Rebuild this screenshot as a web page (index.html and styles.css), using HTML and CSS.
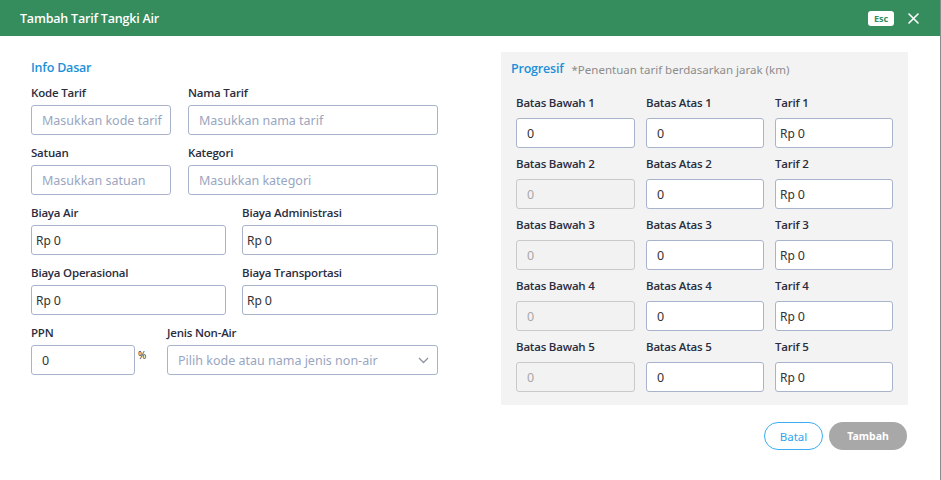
FILE: index.html
```html
<!DOCTYPE html>
<html lang="id">
<head>
<meta charset="utf-8">
<title>Tambah Tarif Tangki Air</title>
<link rel="stylesheet" href="styles.css">
</head>
<body>
<div class="modal">
  <header class="modal-header">
    <h1 class="modal-title">Tambah Tarif Tangki Air</h1>
    <div class="header-actions">
      <span class="esc-badge">Esc</span>
      <svg class="close-icon" width="11" height="11" viewBox="0 0 11 11"><path d="M1 1L10 10M10 1L1 10" stroke="#fff" stroke-width="1.6" stroke-linecap="round"/></svg>
    </div>
  </header>
  <div class="modal-body">
    <section class="info">
      <h2 class="section-title">Info Dasar</h2>
      <div class="row row-a">
        <div class="field"><label>Kode Tarif</label><div class="input placeholder">Masukkan kode tarif</div></div>
        <div class="field"><label>Nama Tarif</label><div class="input placeholder">Masukkan nama tarif</div></div>
      </div>
      <div class="row row-a">
        <div class="field"><label>Satuan</label><div class="input placeholder">Masukkan satuan</div></div>
        <div class="field"><label>Kategori</label><div class="input placeholder">Masukkan kategori</div></div>
      </div>
      <div class="row row-b">
        <div class="field"><label>Biaya Air</label><div class="input rp">Rp<span>0</span></div></div>
        <div class="field"><label>Biaya Administrasi</label><div class="input rp">Rp<span>0</span></div></div>
      </div>
      <div class="row row-b">
        <div class="field"><label>Biaya Operasional</label><div class="input rp">Rp<span>0</span></div></div>
        <div class="field"><label>Biaya Transportasi</label><div class="input rp">Rp<span>0</span></div></div>
      </div>
      <div class="row row-c">
        <div class="field"><label>PPN</label>
          <div class="ppn-wrap"><div class="input num ppn">0</div><span class="pct">%</span></div>
        </div>
        <div class="field"><label>Jenis Non-Air</label>
          <div class="input placeholder select">Pilih kode atau nama jenis non-air
            <svg class="chev" width="11" height="7" viewBox="0 0 11 7"><path d="M1 1L5.5 5.5L10 1" fill="none" stroke="#8f959e" stroke-width="1.3"/></svg>
          </div>
        </div>
      </div>
    </section>
    <div class="right-col">
      <section class="progresif">
        <div class="prog-head"><h2 class="section-title">Progresif</h2><span class="note">*Penentuan tarif berdasarkan jarak (km)</span></div>
        <div class="prog-grid">
          <div class="field"><label>Batas Bawah 1</label><div class="input num">0</div></div>
          <div class="field"><label>Batas Atas 1</label><div class="input num">0</div></div>
          <div class="field"><label>Tarif 1</label><div class="input rp">Rp<span>0</span></div></div>

          <div class="field"><label>Batas Bawah 2</label><div class="input num disabled">0</div></div>
          <div class="field"><label>Batas Atas 2</label><div class="input num">0</div></div>
          <div class="field"><label>Tarif 2</label><div class="input rp">Rp<span>0</span></div></div>

          <div class="field"><label>Batas Bawah 3</label><div class="input num disabled">0</div></div>
          <div class="field"><label>Batas Atas 3</label><div class="input num">0</div></div>
          <div class="field"><label>Tarif 3</label><div class="input rp">Rp<span>0</span></div></div>

          <div class="field"><label>Batas Bawah 4</label><div class="input num disabled">0</div></div>
          <div class="field"><label>Batas Atas 4</label><div class="input num">0</div></div>
          <div class="field"><label>Tarif 4</label><div class="input rp">Rp<span>0</span></div></div>

          <div class="field"><label>Batas Bawah 5</label><div class="input num disabled">0</div></div>
          <div class="field"><label>Batas Atas 5</label><div class="input num">0</div></div>
          <div class="field"><label>Tarif 5</label><div class="input rp">Rp<span>0</span></div></div>
        </div>
      </section>
      <div class="footer">
        <button class="btn btn-outline">Batal</button>
        <button class="btn btn-disabled">Tambah</button>
      </div>
    </div>
  </div>
</div>
</body>
</html>
```

FILE: styles.css
```css
* { box-sizing: border-box; }
html, body { margin: 0; padding: 0; }
body {
  font-family: "Noto Sans", "Open Sans", sans-serif;
  background: #fff;
  width: 941px;
  height: 480px;
  overflow: hidden;
}
.modal {
  width: 941px;
  height: 480px;
  background: #fff;
  border-right: 1px solid #8a8a8a;
}
.modal-header {
  height: 36px;
  background: #358c5d;
  display: flex;
  align-items: center;
  justify-content: space-between;
  padding: 0 21px 0 20px;
}
.modal-title {
  margin: 0;
  color: #fff;
  font-family: "Open Sans", "Noto Sans", sans-serif;
  font-size: 12.5px;
  font-weight: 600;
  letter-spacing: -0.2px;
}
.header-actions { display: flex; align-items: center; gap: 13px; }
.esc-badge {
  background: #fff;
  color: #358c5d;
  font-size: 9px;
  font-weight: 700;
  border-radius: 3px;
  width: 26px;
  height: 15px;
  display: flex;
  align-items: center;
  justify-content: center;
  margin-right: 1px;
}
.close-icon { display: block; }
.modal-body {
  display: flex;
  gap: 63px;
  padding: 16px 0 0 31px;
}
.info { width: 407px; padding-top: 6px; }
.section-title {
  margin: 0;
  font-family: "Open Sans", "Noto Sans", sans-serif;
  font-size: 12.5px;
  font-weight: 600;
  color: #1a90d9;
  line-height: 20px;
  letter-spacing: -0.2px;
}
.info .section-title { margin-bottom: 6px; }
.row { display: grid; margin-bottom: 9px; }
.row-a { grid-template-columns: 140px 250px; column-gap: 17px; }
.row-b { grid-template-columns: 195px 196px; column-gap: 16px; }
.row-c { grid-template-columns: 120px 271px; column-gap: 16px; }
.field label {
  display: block;
  font-family: "Open Sans", "Noto Sans", sans-serif;
  font-size: 11.5px;
  font-weight: 600;
  color: #2a2d3e;
  line-height: 18px;
  margin-bottom: 3px;
  white-space: nowrap;
  letter-spacing: -0.2px;
}
.input {
  height: 30px;
  border: 1px solid #a9b4cc;
  border-radius: 3px;
  background: #fff;
  font-size: 12.5px;
  display: flex;
  align-items: center;
  color: #333;
  white-space: nowrap;
  overflow: hidden;
}
.placeholder { color: #9aa6bf; padding-left: 10px; }
.rp { padding-left: 4px; font-size: 12px; }
.rp span { margin-left: 3px; font-size: 12.5px; }
.num { padding-left: 10px; }
.ppn-wrap { display: flex; align-items: flex-start; }
.ppn { width: 104px; }
.pct { font-size: 10px; color: #333; margin-left: 3px; margin-top: 3px; }
.select { justify-content: space-between; padding-right: 8px; }
.chev { flex: none; }
.right-col { width: 407px; }
.progresif {
  background: #f3f3f3;
  padding: 8px 15px 13px 15px;
}
.prog-head { display: flex; align-items: center; gap: 8px; margin-left: -5px; height: 18px; margin-bottom: 16px; }
.note { font-size: 11.5px; color: #8c8c8c; }
.prog-grid {
  display: grid;
  grid-template-columns: 119px 118px 118px;
  column-gap: 11px;
  row-gap: 7px;
}
.prog-grid .field label { margin-bottom: 6px; }
.disabled { background: #f2f2f2; border-color: #c9c9c9; color: #a8a8a8; }
.footer {
  display: flex;
  justify-content: flex-end;
  gap: 6px;
  margin-top: 17px;
  padding-right: 1px;
}
.btn {
  font-family: inherit;
  height: 28px;
  border-radius: 14px;
  font-size: 11.5px;
  cursor: pointer;
}
.btn-outline {
  width: 59px;
  border: 1px solid #3aaef0;
  background: #fff;
  color: #2ea6ee;
}
.btn-disabled {
  width: 78px;
  border: none;
  background: #a8a8a8;
  color: #fff;
  font-weight: 700;
  font-size: 10.5px;
}
```
